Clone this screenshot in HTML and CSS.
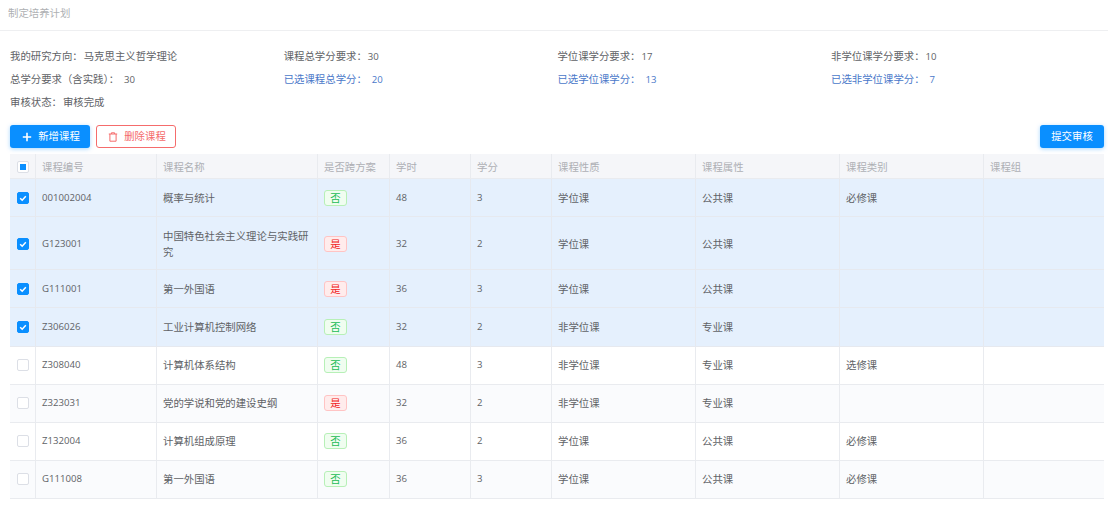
FILE: index.html
```html
<!DOCTYPE html>
<html lang="zh-CN">
<head>
<meta charset="utf-8">
<title>制定培养计划</title>
<link rel="stylesheet" href="styles.css">
</head>
<body>
<header class="title-bar">制定培养计划</header>
<section class="summary">
  <div class="field">我的研究方向：<span class="gap">马克思主义哲学理论</span></div>
  <div class="field">课程总学分要求：<span class="gap num">30</span></div>
  <div class="field">学位课学分要求：<span class="gap num">17</span></div>
  <div class="field">非学位课学分要求：<span class="gap num">10</span></div>
  <div class="field">总学分要求（含实践）：<span class="gap-lg num">30</span></div>
  <div class="field blue">已选课程总学分：<span class="gap-lg num">20</span></div>
  <div class="field blue">已选学位课学分：<span class="gap-lg num">13</span></div>
  <div class="field blue">已选非学位课学分：<span class="gap-lg num">7</span></div>
  <div class="field">审核状态：<span class="gap">审核完成</span></div>
</section>
<div class="toolbar">
  <div class="tool-left">
    <button class="btn primary wide"><svg class="ico" viewBox="0 0 10 10"><path d="M5 .8v8.4M.8 5h8.4" stroke="#fff" stroke-width="1.6" fill="none"/></svg>新增课程</button>
    <button class="btn danger wide"><svg class="ico" viewBox="0 0 10 10"><path d="M.8 2h8.4M3.4 2V.8h3.2V2M1.9 2v7.2h6.2V2" stroke="#f56c6c" stroke-width="1" fill="none"/></svg>删除课程</button>
  </div>
  <button class="btn primary submit">提交审核</button>
</div>
<table class="grid">
  <colgroup>
    <col class="c0"><col class="c1"><col class="c2"><col class="c3"><col class="c4"><col class="c5"><col class="c6"><col class="c7"><col class="c8"><col class="c9">
  </colgroup>
  <thead>
    <tr>
      <th class="check"><span class="box partial"></span></th>
      <th>课程编号</th><th>课程名称</th><th>是否跨方案</th><th>学时</th><th>学分</th><th>课程性质</th><th>课程属性</th><th>课程类别</th><th>课程组</th>
    </tr>
  </thead>
  <tbody>
    <tr class="sel">
      <td class="check"><span class="box on"><svg viewBox="0 0 12 12"><path d="M3.2 6.2l2 2 3.6-4" stroke="#fff" stroke-width="1.5" fill="none"/></svg></span></td>
      <td class="num">001002004</td><td>概率与统计</td><td><span class="tag no">否</span></td><td class="num">48</td><td class="num">3</td><td>学位课</td><td>公共课</td><td>必修课</td><td></td>
    </tr>
    <tr class="sel tall">
      <td class="check"><span class="box on"><svg viewBox="0 0 12 12"><path d="M3.2 6.2l2 2 3.6-4" stroke="#fff" stroke-width="1.5" fill="none"/></svg></span></td>
      <td class="num">G123001</td><td>中国特色社会主义理论与实践研究</td><td><span class="tag yes">是</span></td><td class="num">32</td><td class="num">2</td><td>学位课</td><td>公共课</td><td></td><td></td>
    </tr>
    <tr class="sel">
      <td class="check"><span class="box on"><svg viewBox="0 0 12 12"><path d="M3.2 6.2l2 2 3.6-4" stroke="#fff" stroke-width="1.5" fill="none"/></svg></span></td>
      <td class="num">G111001</td><td>第一外国语</td><td><span class="tag yes">是</span></td><td class="num">36</td><td class="num">3</td><td>学位课</td><td>公共课</td><td></td><td></td>
    </tr>
    <tr class="sel grown">
      <td class="check"><span class="box on"><svg viewBox="0 0 12 12"><path d="M3.2 6.2l2 2 3.6-4" stroke="#fff" stroke-width="1.5" fill="none"/></svg></span></td>
      <td class="num">Z306026</td><td>工业计算机控制网络</td><td><span class="tag no">否</span></td><td class="num">32</td><td class="num">2</td><td>非学位课</td><td>专业课</td><td></td><td></td>
    </tr>
    <tr class="lower">
      <td class="check"><span class="box"></span></td>
      <td class="num">Z308040</td><td>计算机体系结构</td><td><span class="tag no">否</span></td><td class="num">48</td><td class="num">3</td><td>非学位课</td><td>专业课</td><td>选修课</td><td></td>
    </tr>
    <tr class="alt lower">
      <td class="check"><span class="box"></span></td>
      <td class="num">Z323031</td><td>党的学说和党的建设史纲</td><td><span class="tag yes">是</span></td><td class="num">32</td><td class="num">2</td><td>非学位课</td><td>专业课</td><td></td><td></td>
    </tr>
    <tr class="lower">
      <td class="check"><span class="box"></span></td>
      <td class="num">Z132004</td><td>计算机组成原理</td><td><span class="tag no">否</span></td><td class="num">36</td><td class="num">2</td><td>学位课</td><td>公共课</td><td>必修课</td><td></td>
    </tr>
    <tr class="alt lower">
      <td class="check"><span class="box"></span></td>
      <td class="num">G111008</td><td>第一外国语</td><td><span class="tag no">否</span></td><td class="num">36</td><td class="num">3</td><td>学位课</td><td>公共课</td><td>必修课</td><td></td>
    </tr>
  </tbody>
</table>
</body>
</html>
```
FILE: styles.css
```css
* { box-sizing: border-box; }
html, body { margin: 0; padding: 0; background: #fff; }
body {
  font-family: "Noto Sans CJK SC", "Noto Sans", sans-serif;
  font-size: 10.4px;
  color: #606266;
  width: 1108px;
  height: 505px;
  overflow: hidden;
}
.title-bar {
  height: 31px;
  padding: 0 8px;
  line-height: 25px;
  color: #aeb0b3;
  border-bottom: 1px solid #eeeff1;
}
.summary {
  display: grid;
  grid-template-columns: repeat(4, 273.7px);
  grid-auto-rows: 23px;
  padding: 13px 0 0 10px;
  line-height: 23px;
}
.blue { color: #4a78c9; }
.gap { margin-left: 1px; }
.gap-lg { margin-left: 5px; }
.num { font-family: "Open Sans", "Noto Sans CJK SC", sans-serif; font-size: 9.6px; }
.toolbar {
  display: flex;
  justify-content: space-between;
  padding: 0 4px 0 10px;
  margin-top: 12px;
}
.tool-left { display: flex; gap: 6px; }
.btn {
  display: flex;
  align-items: center;
  justify-content: center;
  height: 23px;
  padding: 0;
  border-radius: 3px;
  font: inherit;
  line-height: 1;
  border: 1px solid transparent;
}
.wide { width: 80px; padding-left: 2px; }
.submit { width: 64px; }
.primary { background: #0a8fff; color: #fff; box-shadow: 0 1px 4px rgba(10, 143, 255, .35); }
.danger { background: #fff; color: #f56c6c; border-color: #f56c6c; }
.ico { width: 10px; height: 10px; margin-right: 6px; }
.grid {
  margin: 6px 0 0 10px;
  width: 1094px;
  table-layout: fixed;
  border-collapse: separate;
  border-spacing: 0;
}
.c0 { width: 26px; } .c1 { width: 121px; } .c2 { width: 161px; } .c3 { width: 72px; }
.c4 { width: 81px; } .c5 { width: 81px; } .c6 { width: 144px; } .c7 { width: 144px; }
.c8 { width: 144px; } .c9 { width: 120px; }
th, td {
  padding: 0 6px;
  text-align: left;
  font-weight: 400;
  border-bottom: 1px solid #e9ebef;
  border-right: 1px solid #e9ebef;
  line-height: 15.6px;
  word-break: break-all;
}
th:last-child, td:last-child { border-right: 0; }
th { height: 25px; padding-top: 1px; background: #f5f6f9; color: #aeb0b5; }
td { height: 38px; }
.tall td { height: 53px; padding-top: 1px; }
.grown td { height: 39px; padding-bottom: 1px; }
.lower td { padding-bottom: 2px; }
.sel td { background: #e5f0fd; border-color: #e6e9ef; }
.alt td { background: #fafbfd; }
td.check, th.check { padding-left: 7px; padding-right: 0; }
.box {
  display: block;
  width: 12px;
  height: 12px;
  border: 1px solid #dcdfe6;
  border-radius: 2px;
  background: #fff;
}
.box.on { background: #0a8fff; border-color: #0a8fff; }
.box.on svg { display: block; width: 12px; height: 12px; margin: -1px; }
.box.partial { display: flex; align-items: center; justify-content: center; }
.box.partial::after { content: ""; width: 6px; height: 6px; background: #0a8fff; }
.tag {
  display: block;
  width: 23px;
  height: 16px;
  line-height: 14px;
  text-align: center;
  border: 1px solid;
  border-radius: 3px;
  font-size: 10.4px;
}
.no { background: #f0fdf0; border-color: #b7f0b7; color: #22bb55; }
.yes { background: #ffecec; border-color: #ffc4c4; color: #f02020; }
```
